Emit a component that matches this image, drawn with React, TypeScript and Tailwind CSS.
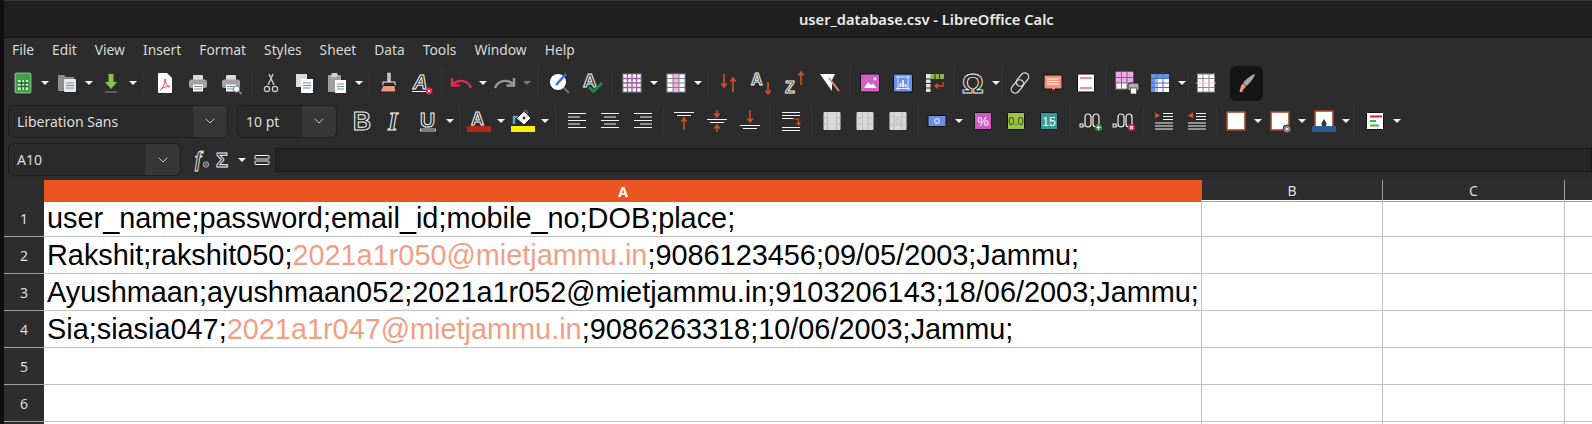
import { ChevronDown } from "lucide-react";
import React, { FC, ReactNode } from "react";

const Svg: FC<{ children: ReactNode }> = ({ children }) => (
  <svg width={24} height={24} viewBox="0 0 24 24" fill="none" className="overflow-visible">
    {children}
  </svg>
);

const Glyph: FC<{ x: number; y: number; size: number; t: string; italic?: boolean; w?: number; serif?: boolean }> = ({ x, y, size, t, italic, w = 1, serif }) => (
  <text
    x={x}
    y={y}
    fontSize={size}
    fontWeight={700}
    fontStyle={italic ? "italic" : "normal"}
    fontFamily={serif ? '"Liberation Serif", serif' : '"Liberation Sans", sans-serif'}
    fill="#2c2c2c"
    stroke="#f4f4f4"
    strokeWidth={w}
  >
    {t}
  </text>
);

const Tool: FC<{ children: ReactNode; className?: string }> = ({ children, className = "w-[33px]" }) => (
  <div className={`flex h-[33px] shrink-0 items-center justify-center ${className}`}>{children}</div>
);

const Arrow: FC<{ off?: boolean; className?: string }> = ({ off, className = "w-[11px]" }) => (
  <div className={`flex shrink-0 justify-center ${className}`}>
    <div className={`h-0 w-0 border-x-[4px] border-t-[4px] border-x-transparent ${off ? "border-t-[#777777]" : "border-t-[#f0f0f0]"}`} />
  </div>
);

const Sep: FC<{ className: string }> = ({ className }) => (
  <div className={`flex h-[30px] shrink-0 justify-center ${className}`}>
    <div className="w-px bg-[#333333]" />
  </div>
);

const Lines: FC<{ x: number; y: number; w: number; n?: number; c?: string; step?: number }> = ({ x, y, w, n = 3, c = "#7f86ad", step = 2.5 }) => (
  <>
    {Array.from({ length: n }).map((_, i) => (
      <path key={i} d={`M${x} ${y + i * step}h${w}`} stroke={c} />
    ))}
  </>
);

const Printer = () => (
  <>
    <rect x="7" y="4" width="10" height="6" rx="1" fill="#d9d9d9" />
    <rect x="3" y="8.5" width="18" height="8.5" rx="2.5" fill="#a3a3a3" />
    <rect x="7" y="13.5" width="10" height="7" fill="#ffffff" />
    <Lines x={8} y={15.5} w={8} n={2} />
  </>
);

const NewCalc = () => (
  <Svg>
    <rect x="4" y="2" width="16" height="20" rx="1.5" fill="#43a047" stroke="#d7ecd8" strokeWidth=".6" />
    <rect x="7" y="9" width="10" height="10" fill="#d6efd6" />
    <path d="M7 12h10M7 15.5h10M10.5 9v10M14 9v10" stroke="#1b6e2b" strokeWidth="1.4" />
  </Svg>
);
const OpenIcon = () => (
  <Svg>
    <path d="M3 5q0-1 1-1h5l2 2h8v14H4q-1 0-1-1z" fill="#8e8e8e" />
    <rect x="9" y="8" width="12" height="13" rx="1" fill="#e9e9e9" />
    <Lines x={11} y={12} w={8} />
  </Svg>
);
const SaveIcon = () => (
  <Svg>
    <path d="M9.5 3h5v8h3.5L12 18 6 11h3.5z" fill="#8bc34a" />
    <path d="M6 21h12" stroke="#8a8a8a" />
  </Svg>
);
const Pdf = () => (
  <Svg>
    <path d="M5 3q0-1 1-1h8l5 5v14q0 1-1 1H6q-1 0-1-1z" fill="#ffffff" />
    <path d="M7 19c3-2 5-6 5-11 0 4 2 7 5 8-3-1-7 0-10 3z" stroke="#d9534f" strokeWidth="1" />
  </Svg>
);
const PrintIcon = () => (
  <Svg>
    <Printer />
  </Svg>
);
const Preview = () => (
  <Svg>
    <Printer />
    <circle cx="17.5" cy="18" r="3.2" fill="#ffffff" stroke="#777777" />
    <path d="M20 20.5l2.5 2.5" stroke="#999999" strokeWidth="1.5" />
  </Svg>
);
const Cut = () => (
  <Svg>
    <path d="M9 14L14 3M15 14L10 3" stroke="#c9c9c9" strokeWidth="1.4" />
    <circle cx="8" cy="18" r="2.6" stroke="#c9c9c9" strokeWidth="1.3" />
    <circle cx="16" cy="18" r="2.6" stroke="#c9c9c9" strokeWidth="1.3" />
  </Svg>
);
const Copy = () => (
  <Svg>
    <rect x="4" y="3" width="11" height="13" fill="#dddddd" />
    <rect x="9" y="8" width="12" height="14" fill="#ffffff" />
    <Lines x={11} y={12} w={8} />
  </Svg>
);
const Paste = () => (
  <Svg>
    <rect x="3" y="4" width="13" height="17" rx="1" fill="#a0a0a0" />
    <rect x="6.5" y="2" width="6" height="4" rx="1" fill="#d5d5d5" />
    <rect x="10" y="9" width="11" height="13" fill="#ffffff" />
    <Lines x={12} y={13} w={7} />
  </Svg>
);
const Clone = () => (
  <Svg>
    <rect x="10.5" y="2" width="3" height="9" fill="#bdbdbd" stroke="#eeeeee" strokeWidth=".5" />
    <rect x="6" y="11" width="12" height="3.5" fill="#2c2c2c" stroke="#eeeeee" />
    <path d="M6 14.5h12l1 6.5H3z" fill="#f2947d" stroke="#1d1d1d" />
  </Svg>
);
const ClearA = () => (
  <Svg>
    <Glyph x={3} y={18} size={20} t="A" italic />
    <path d="M2 20.5h15" stroke="#f4f4f4" />
    <circle cx="19" cy="20" r="3.4" fill="#d92c4e" />
    <path d="M17.7 18.7l2.6 2.6M20.3 18.7l-2.6 2.6" stroke="#ffffff" />
  </Svg>
);
const Undo = () => (
  <Svg>
    <path d="M22 17C19 9 10 8 4 13" stroke="#e0284f" strokeWidth="2.4" />
    <path d="M3 7v7.5h7.5" stroke="#e0284f" strokeWidth="2.4" />
  </Svg>
);
const Redo = () => (
  <Svg>
    <path d="M2 17C5 9 14 8 20 13" stroke="#9a9a9a" strokeWidth="2.4" />
    <path d="M21 7v7.5h-7.5" stroke="#9a9a9a" strokeWidth="2.4" />
  </Svg>
);
const Find = () => (
  <Svg>
    <circle cx="10" cy="11" r="8" fill="#ffffff" />
    <path d="M8 14L18 3" stroke="#3b6fd4" strokeWidth="2.6" />
    <path d="M16 17l5 5" stroke="#777777" strokeWidth="1.8" />
  </Svg>
);
const Spell = () => (
  <Svg>
    <Glyph x={2} y={16} size={19} t="A" />
    <path d="M8 16l4.5 4.5L21 12" stroke="#1f8a3b" strokeWidth="3" />
  </Svg>
);
const Grid1 = () => (
  <Svg>
    <rect x="3" y="3" width="18" height="18" fill="#ffffff" stroke="#8a8a8a" />
    <path d="M3 7.5h18M3 12h18M3 16.5h18M7.5 3v18M12 3v18M16.5 3v18" stroke="#a45ca4" strokeWidth="1.4" />
  </Svg>
);
const Grid2 = () => (
  <Svg>
    <rect x="3" y="3" width="18" height="18" fill="#ffffff" stroke="#8a8a8a" />
    <rect x="9" y="3" width="6" height="18" fill="#f0b4ec" />
    <path d="M3 7.5h18M3 12h18M3 16.5h18M9 3v18M15 3v18" stroke="#777777" strokeWidth=".9" />
  </Svg>
);
const OrangeArrow: FC<{ x: number; y: number; h: number; up?: boolean }> = ({ x, y, h, up }) => (
  <path
    d={up ? `M${x} ${y + h}V${y + 2}M${x - 2.6} ${y + 3.5}L${x} ${y}l2.6 3.5` : `M${x} ${y}V${y + h - 2}M${x - 2.6} ${y + h - 3.5}L${x} ${y + h}l2.6-3.5`}
    stroke="#d9512c"
    strokeWidth="1.5"
  />
);
const Sort = () => (
  <Svg>
    <OrangeArrow x={7} y={3} h={13} />
    <OrangeArrow x={16} y={7} h={14} up />
  </Svg>
);
const SortA = () => (
  <Svg>
    <Glyph x={1} y={14} size={16} t="A" />
    <OrangeArrow x={18} y={11} h={12} />
  </Svg>
);
const SortZ = () => (
  <Svg>
    <Glyph x={2} y={22} size={16} t="Z" />
    <OrangeArrow x={18} y={1} h={13} up />
  </Svg>
);
const Filter = () => (
  <Svg>
    <path d="M2 3h15l-3 6v11L9 13z" fill="#ffffff" />
    <path d="M11 7l10 13" stroke="#e58b74" strokeWidth="2" />
  </Svg>
);
const ImageIcon = () => (
  <Svg>
    <rect x="2.5" y="3" width="19" height="18" rx="1.5" fill="#d35fc8" stroke="#111111" />
    <path d="M6 17l4-6 3 3 2-1.5 3.5 4.5z" fill="#ffffff" />
    <circle cx="17" cy="8" r="1.4" fill="#ffffff" />
  </Svg>
);
const Chart = () => (
  <Svg>
    <rect x="2.5" y="3" width="19" height="18" rx="1.5" fill="#6a8fe8" stroke="#111111" />
    <path d="M5 6h14M7 5v14M5 17.5h14M17 5v14" stroke="#ffffff" strokeWidth=".8" />
    <path d="M9.5 16v-4M12 16v-7M14.5 16v-3" stroke="#ffffff" strokeWidth="1.6" />
  </Svg>
);
const Pivot = () => (
  <Svg>
    <rect x="3" y="3" width="18" height="5" fill="#8fb24a" />
    <rect x="3" y="3" width="4.5" height="18" fill="#e3e3e3" />
    <path d="M3 8h5M3 12.5h5M3 17h5M12 3v5M16.5 3v5" stroke="#2c2c2c" />
    <path d="M20 11v4h-8M15 12.5L12 15l3 2.5" stroke="#d9512c" strokeWidth="1.3" />
  </Svg>
);
const Omega = () => (
  <Svg>
    <Glyph x={0} y={21.5} size={27} t="Ω" w={0.9} />
  </Svg>
);
const LinkIcon = () => (
  <Svg>
    <g stroke="#d8d8d8" strokeWidth="1.3">
      <rect x="10.5" y="1" width="8" height="15" rx="4" transform="rotate(40 14.5 8.5)" />
      <rect x="5.5" y="8" width="8" height="15" rx="4" transform="rotate(40 9.5 15.5)" />
    </g>
  </Svg>
);
const Comment = () => (
  <Svg>
    <path d="M3 4h18v14h-7l-3 3v-3H3z" fill="#f4917b" stroke="#111111" />
    <Lines x={6} y={8} w={12} n={3} c="#ffffff" />
  </Svg>
);
const Headers = () => (
  <Svg>
    <rect x="3.5" y="3" width="17" height="18" rx="1" fill="#ffffff" stroke="#111111" />
    <path d="M6 7h12M6 17h12" stroke="#f0917c" strokeWidth="2" />
  </Svg>
);
const PrintArea = () => (
  <Svg>
    <rect x="1" y="1" width="17" height="17" fill="#ffffff" stroke="#8a8a8a" />
    <rect x="1" y="1" width="17" height="11" fill="#f0a8ea" />
    <path d="M1 6.5h17M1 12h17M6.5 1v17M12 1v17" stroke="#666666" strokeWidth=".9" />
    <rect x="13" y="12" width="11" height="8" rx="2" fill="#b0b0b0" stroke="#222222" />
    <rect x="15.5" y="17" width="6" height="6" fill="#ffffff" stroke="#222222" strokeWidth=".6" />
  </Svg>
);
const TableBlue = () => (
  <Svg>
    <rect x="3" y="3" width="18" height="18" fill="#ffffff" />
    <rect x="3" y="3" width="18" height="4.5" fill="#6a8fe8" />
    <rect x="3" y="3" width="4.5" height="18" fill="#6a8fe8" />
    <path d="M3 7.5h18M3 12h18M3 16.5h18M9 3v18M15 3v18" stroke="#4f6fc4" strokeWidth="1" />
  </Svg>
);
const Freeze = () => (
  <Svg>
    <rect x="3.5" y="3" width="17" height="18" fill="#ffffff" stroke="#8a8a8a" />
    <path d="M3 7.5h18M3 16.5h18M9 3v18M15 3v18" stroke="#8a8a8a" strokeWidth="1" />
    <path d="M2 12h20" stroke="#e6a6dc" strokeWidth="1.2" strokeDasharray="2 1" />
  </Svg>
);
const SideBrush = () => (
  <Svg>
    <path d="M21 3C20 7 16 12 12.5 15L9 12C12 8 17 4 21 3z" fill="#a8a8a8" />
    <path d="M9 12.5l3 2.5c-.5 1.5-1.5 2.5-2.5 3L8 21.5l-2.5-1 1-4c.5-2 1.500-3.500 2.500-4z" fill="#ef9280" />
  </Svg>
);

const BoldB = () => (
  <Svg>
    <Glyph x={3} y={21} size={25} t="B" />
  </Svg>
);
const ItalicI = () => (
  <Svg>
    <Glyph x={5} y={20.5} size={25} t="I" italic serif />
  </Svg>
);
const UnderU = () => (
  <Svg>
    <Glyph x={4} y={17.5} size={21} t="U" />
    <rect x="4.5" y="20" width="15" height="2" stroke="#f4f4f4" strokeWidth=".8" />
  </Svg>
);
const FontColor = () => (
  <Svg>
    <Glyph x={4} y={16} size={18} t="A" />
    <rect x="0" y="17" width="24" height="6" fill="#b3261e" />
  </Svg>
);
const Bucket = () => (
  <Svg>
    <path d="M3 15V8h4" stroke="#5ea4d8" strokeWidth="2.4" />
    <path d="M13 2l-7.5 7.5L13 16l7-7z" fill="#ffffff" stroke="#1d1d1d" />
    <circle cx="13" cy="9" r="1.4" fill="#2c2c2c" />
    <path d="M13 5V2q2-2 3 0v6" stroke="#9a9a9a" strokeWidth=".8" />
    <rect x="0" y="17" width="24" height="6" fill="#f7f100" />
  </Svg>
);
const alignBase = "#f4f4f4";
const AlignLeft = () => (
  <Svg>
    <path d="M3 4.5h18M3 8h12M3 11.5h18M3 15h12M3 18.5h18" stroke={alignBase} />
  </Svg>
);
const AlignCenter = () => (
  <Svg>
    <path d="M3 4.5h18M6 8h12M3 11.5h18M6 15h12M3 18.5h18" stroke={alignBase} />
  </Svg>
);
const AlignRight = () => (
  <Svg>
    <path d="M3 4.5h18M9 8h12M3 11.5h18M9 15h12M3 18.5h18" stroke={alignBase} />
  </Svg>
);
const VTop = () => (
  <Svg>
    <path d="M2 3.5h20M5 6.5h14" stroke={alignBase} />
    <OrangeArrow x={12} y={9} h={12} up />
  </Svg>
);
const VMid = () => (
  <Svg>
    <path d="M2 10.5h20M5 13.5h14" stroke={alignBase} />
    <OrangeArrow x={12} y={1} h={7} />
    <OrangeArrow x={12} y={16} h={7} up />
  </Svg>
);
const VBot = () => (
  <Svg>
    <path d="M2 16.5h20M5 19.5h14" stroke={alignBase} />
    <OrangeArrow x={12} y={1} h={12} />
  </Svg>
);
const Wrap = () => (
  <Svg>
    <path d="M3 3.5h18M3 6.5h18M3 9.5h11M3 18.5h18M3 21.5h18" stroke={alignBase} />
    <path d="M14 10h5.5v5" stroke="#d9512c" />
    <path d="M17 13.5h5L19.5 17z" fill="#d9512c" />
  </Svg>
);
const Merge: FC<{ d: string }> = ({ d }) => (
  <Svg>
    <rect x="3.5" y="3" width="17" height="18" rx="1" fill="#d8d8d8" />
    <path d={d} stroke="#bdbdbd" />
  </Svg>
);
const Currency = () => (
  <Svg>
    <rect x="3" y="6.5" width="18" height="11" rx="1" fill="#6a8fe8" stroke="#111111" />
    <circle cx="12" cy="12" r="2.4" stroke="#ffffff" />
  </Svg>
);
const Percent = () => (
  <Svg>
    <rect x="3.5" y="3.5" width="17" height="17" rx="1" fill="#cc5cc2" stroke="#111111" />
    <text x="12" y="17" textAnchor="middle" fontSize="13" fill="#ffffff" fontFamily='"Liberation Sans", sans-serif'>%</text>
  </Svg>
);
const Numeric = () => (
  <Svg>
    <rect x="3.5" y="3.5" width="17" height="17" rx="1" fill="#9ac448" stroke="#111111" />
    <text x="12" y="16" textAnchor="middle" fontSize="11" fill="#2f4a12" fontFamily='"Liberation Sans", sans-serif'>0.0</text>
  </Svg>
);
const DateIcon = () => (
  <Svg>
    <rect x="3.5" y="3.5" width="17" height="17" rx="1" fill="#2f9e98" stroke="#111111" />
    <text x="12" y="16.5" textAnchor="middle" fontSize="12" fill="#ffffff" fontFamily='"Liberation Sans", sans-serif'>15</text>
  </Svg>
);
const Decimal: FC<{ add?: boolean }> = ({ add }) => (
  <Svg>
    <rect x="1" y="15" width="3" height="3" stroke="#f4f4f4" />
    <path d="M4 17h1.5" stroke="#f4f4f4" />
    <rect x="6" y="5" width="6" height="13" rx="3" stroke="#f4f4f4" strokeWidth="1.2" />
    <rect x="14" y="5" width="6" height="13" rx="3" stroke="#f4f4f4" strokeWidth="1.2" />
    <circle cx="19.5" cy="18.5" r="3.6" fill={add ? "#3a8c3f" : "#d92c4e"} />
    <path d={add ? "M17.5 18.5h4M19.5 16.5v4" : "M18.2 17.2l2.6 2.6M20.8 17.2l-2.6 2.6"} stroke="#ffffff" strokeWidth="1.2" />
  </Svg>
);
const Indent: FC<{ out?: boolean }> = ({ out }) => (
  <Svg>
    <path d="M11 4.5h10M11 7.5h10M11 10.5h10M3 14h18M3 17h18M3 20h18" stroke="#f4f4f4" />
    <path d={out ? "M8 3.5v6L3 6.5z" : "M3 3.5v6l5-3z"} fill="#d9512c" />
  </Svg>
);
const BorderBox = () => (
  <Svg>
    <rect x="3" y="3" width="18" height="18" fill="#ffffff" stroke="#a9472a" strokeWidth="1.6" />
  </Svg>
);
const BorderStyle = () => (
  <Svg>
    <rect x="3" y="3" width="18" height="18" fill="#ffffff" stroke="#a9472a" strokeWidth="1.6" />
    <circle cx="19" cy="20" r="4" fill="#8a8a8a" stroke="#2c2c2c" />
    <circle cx="19" cy="20" r="1.3" fill="#e0e0e0" />
  </Svg>
);
const BorderColor = () => (
  <Svg>
    <rect x="3" y="2" width="18" height="17" fill="#ffffff" stroke="#a9472a" strokeWidth="1.6" />
    <path d="M12 10c-1 2-2.5 3-2.5 5a2.5 2.5 0 0 0 5 0c0-2-1.5-3-2.5-5z" fill="#333333" />
    <rect x="0" y="17" width="24" height="6" fill="#2a5d96" />
  </Svg>
);
const Cond = () => (
  <Svg>
    <rect x="3.5" y="3.5" width="17" height="17" rx="1" fill="#ffffff" stroke="#111111" />
    <path d="M7 7.5h12" stroke="#c2263a" strokeWidth="2" />
    <path d="M7 12h6" stroke="#4caf3c" strokeWidth="2" />
    <path d="M7 16.5h9" stroke="#4caf3c" strokeWidth="2" />
  </Svg>
);
const Fx = () => (
  <Svg>
    <Glyph x={5} y={17.5} size={20} t="f" w={0.8} italic serif />
    <circle cx="16" cy="16.5" r="2.7" stroke="#dddddd" strokeWidth=".8" />
    <path d="M14.8 15.3l2.4 2.4M17.2 15.3l-2.4 2.4" stroke="#dddddd" strokeWidth=".8" />
  </Svg>
);
const Sigma = () => (
  <Svg>
    <Glyph x={4} y={19} size={20} t="Σ" w={0.9} />
  </Svg>
);
const Equals = () => (
  <Svg>
    <rect x="5" y="7.5" width="14" height="3.5" rx=".5" stroke="#f4f4f4" />
    <rect x="5" y="13" width="14" height="3.5" rx=".5" stroke="#f4f4f4" />
  </Svg>
);

const Combo: FC<{ label: string; left: string; right: string }> = ({ label, left, right }) => (
  <div className="flex h-[33px] shrink-0 overflow-hidden rounded-md border border-[#1f1f1f] bg-[#2a2a2a] text-[14px] text-[#dedede]">
    <div className={`flex items-center pl-[8px] ${left}`}>{label}</div>
    <div className={`flex items-center justify-center bg-[#373737] ${right}`}>
      <ChevronDown size={16} color="#c8c8c8" strokeWidth={1.5} />
    </div>
  </div>
);

const menus = ["File", "Edit", "View", "Insert", "Format", "Styles", "Sheet", "Data", "Tools", "Window", "Help"];

const cols = "grid grid-cols-[40px_1158px_181px_182px_1fr]";

const Row: FC<{ n?: number; children?: ReactNode }> = ({ n, children }) => (
  <div className={`${cols} h-[37px]`}>
    <div className="flex items-center justify-center border-b border-[#a0a0a0] bg-[#2d2d2d] font-['Noto_Sans',sans-serif] text-[14px] text-[#dddddd]">{n}</div>
    <div className="overflow-hidden whitespace-nowrap border-r border-b border-[#c0c0c0] pl-[3px] text-[28.87px] leading-[36px] text-black">{children}</div>
    <div className="border-r border-b border-[#c0c0c0]" />
    <div className="border-r border-b border-[#c0c0c0]" />
    <div className="border-b border-[#c0c0c0]" />
  </div>
);

const Mail: FC<{ children: ReactNode }> = ({ children }) => <span className="text-[#ef9f86]">{children}</span>;

export default function App() {
  return (
    <div className="flex h-[424px] w-[1592px] overflow-hidden bg-[#120c10] font-['Noto_Sans',sans-serif]">
      <div className="w-[4px] shrink-0" />
      <div className="flex min-w-0 flex-1 flex-col">
        <div className="flex h-[38px] shrink-0 items-center border-t border-b border-t-[#3a3a3a] border-b-[#161616] bg-[#202020] pt-[1px] pl-[795px] text-[14.7px] font-semibold text-[#ececec]">
          user_database.csv - LibreOffice Calc
        </div>
        <div className="flex h-[24px] shrink-0 items-center gap-[18px] bg-[#2c2c2c] pt-[1px] pl-[8px] text-[13.8px] text-[#d8d8d8]">
          {menus.map((m) => (
            <span key={m}>{m}</span>
          ))}
        </div>

        <div className="flex h-[42px] shrink-0 items-center bg-[#2c2c2c] pl-[2.5px]">
          <Tool><NewCalc /></Tool>
          <Arrow />
          <Tool><OpenIcon /></Tool>
          <Arrow />
          <Tool><SaveIcon /></Tool>
          <Arrow />
          <Sep className="w-[10px]" />
          <Tool><Pdf /></Tool>
          <Tool><PrintIcon /></Tool>
          <Tool><Preview /></Tool>
          <Sep className="w-[7px]" />
          <Tool><Cut /></Tool>
          <Tool><Copy /></Tool>
          <Tool><Paste /></Tool>
          <Arrow />
          <Sep className="w-[8px]" />
          <Tool><Clone /></Tool>
          <Tool><ClearA /></Tool>
          <Sep className="w-[6px]" />
          <Tool><Undo /></Tool>
          <Arrow />
          <Tool><Redo /></Tool>
          <Arrow off />
          <Sep className="w-[11px]" />
          <Tool><Find /></Tool>
          <Tool><Spell /></Tool>
          <Sep className="w-[6px]" />
          <Tool><Grid1 /></Tool>
          <Arrow />
          <Tool><Grid2 /></Tool>
          <Arrow />
          <Sep className="w-[9px]" />
          <Tool><Sort /></Tool>
          <Tool><SortA /></Tool>
          <Tool><SortZ /></Tool>
          <Tool className="w-[36px]"><Filter /></Tool>
          <Sep className="w-[6px]" />
          <Tool><ImageIcon /></Tool>
          <Tool className="w-[32px]"><Chart /></Tool>
          <Tool><Pivot /></Tool>
          <Sep className="w-[6px]" />
          <Tool><Omega /></Tool>
          <Arrow />
          <Sep className="w-[2px]" />
          <Tool><LinkIcon /></Tool>
          <Tool><Comment /></Tool>
          <Tool><Headers /></Tool>
          <Sep className="w-[8px]" />
          <Tool><PrintArea /></Tool>
          <Tool><TableBlue /></Tool>
          <Arrow />
          <Sep className="w-[2px]" />
          <Tool><Freeze /></Tool>
          <Sep className="w-[7px]" />
          <div className="flex h-[35px] w-[33px] shrink-0 items-center justify-center rounded-md bg-[#151515]">
            <SideBrush />
          </div>
        </div>

        <div className="flex h-[34px] shrink-0 items-center bg-[#2c2c2c] pl-[4px]">
          <Combo label="Liberation Sans" left="w-[184px]" right="w-[34px]" />
          <div className="w-[9px] shrink-0" />
          <Combo label="10 pt" left="w-[64px]" right="w-[34px]" />
          <div className="w-[8.5px] shrink-0" />
          <Tool><BoldB /></Tool>
          <Tool><ItalicI /></Tool>
          <Tool><UnderU /></Tool>
          <Arrow />
          <Sep className="w-[7px]" />
          <Tool><FontColor /></Tool>
          <Arrow />
          <Tool><Bucket /></Tool>
          <Arrow />
          <Sep className="w-[9.5px]" />
          <Tool><AlignLeft /></Tool>
          <Tool><AlignCenter /></Tool>
          <Tool><AlignRight /></Tool>
          <Sep className="w-[8px]" />
          <Tool><VTop /></Tool>
          <Tool><VMid /></Tool>
          <Tool><VBot /></Tool>
          <Sep className="w-[8px]" />
          <Tool><Wrap /></Tool>
          <Sep className="w-[8px]" />
          <Tool><Merge d="M3.5 9h4M3.5 15h4M7.5 3v18M16.5 3v18M16.5 9h4M16.5 15h4" /></Tool>
          <Tool><Merge d="M3.5 9h6M3.5 15h6M9.5 3v18M15 9h5.5M15 15h5.5M15 3v18" /></Tool>
          <Tool><Merge d="M8 3v18M16 3v18M3.5 8h17M3.5 16h17M10 10h4v4h-4z" /></Tool>
          <Sep className="w-[6px]" />
          <Tool><Currency /></Tool>
          <Arrow />
          <div className="w-[2px] shrink-0" />
          <Tool><Percent /></Tool>
          <Tool><Numeric /></Tool>
          <Tool><DateIcon /></Tool>
          <Sep className="w-[9px]" />
          <Tool><Decimal add /></Tool>
          <Tool><Decimal /></Tool>
          <Sep className="w-[7px]" />
          <Tool><Indent /></Tool>
          <Tool><Indent out /></Tool>
          <Sep className="w-[6px]" />
          <Tool><BorderBox /></Tool>
          <Arrow />
          <Tool><BorderStyle /></Tool>
          <Arrow />
          <Tool><BorderColor /></Tool>
          <Arrow />
          <Sep className="w-[7px]" />
          <Tool><Cond /></Tool>
          <Arrow />
        </div>

        <div className="flex h-[42px] shrink-0 items-center bg-[#2c2c2c] pt-[1px] pl-[4px]">
          <Combo label="A10" left="w-[136px]" right="w-[35px]" />
          <div className="w-[10px] shrink-0" />
          <Tool className="w-[22px]"><Fx /></Tool>
          <Tool className="w-[22px]"><Sigma /></Tool>
          <Arrow className="w-[14px]" />
          <Tool className="w-[26px]"><Equals /></Tool>
          <div className="h-[24px] flex-1 border border-[#1c1c1c] bg-[#252525]" />
        </div>

        <div className="flex-1 overflow-hidden bg-white font-['Liberation_Sans',sans-serif]">
          <div className={`${cols} h-[20px] bg-[#2d2d2d] font-['Noto_Sans',sans-serif] text-[14px] text-[#dddddd]`}>
            <div className="border-b border-[#a0a0a0]" />
            <div className="flex items-center justify-center bg-[#e95420] font-bold text-white">A</div>
            <div className="flex items-center justify-center border-r border-b border-[#a0a0a0]">B</div>
            <div className="flex items-center justify-center border-r border-b border-[#a0a0a0]">C</div>
            <div className="border-b border-[#a0a0a0]" />
          </div>
          <Row n={1}>user_name;password;email_id;mobile_no;DOB;place;</Row>
          <Row n={2}>
            Rakshit;rakshit050;<Mail>2021a1r050@mietjammu.in</Mail>;9086123456;09/05/2003;Jammu;
          </Row>
          <Row n={3}>Ayushmaan;ayushmaan052;2021a1r052@mietjammu.in;9103206143;18/06/2003;Jammu;</Row>
          <Row n={4}>
            Sia;siasia047;<Mail>2021a1r047@mietjammu.in</Mail>;9086263318;10/06/2003;Jammu;
          </Row>
          <Row n={5} />
          <Row n={6} />
          <Row />
        </div>
      </div>
    </div>
  );
}
